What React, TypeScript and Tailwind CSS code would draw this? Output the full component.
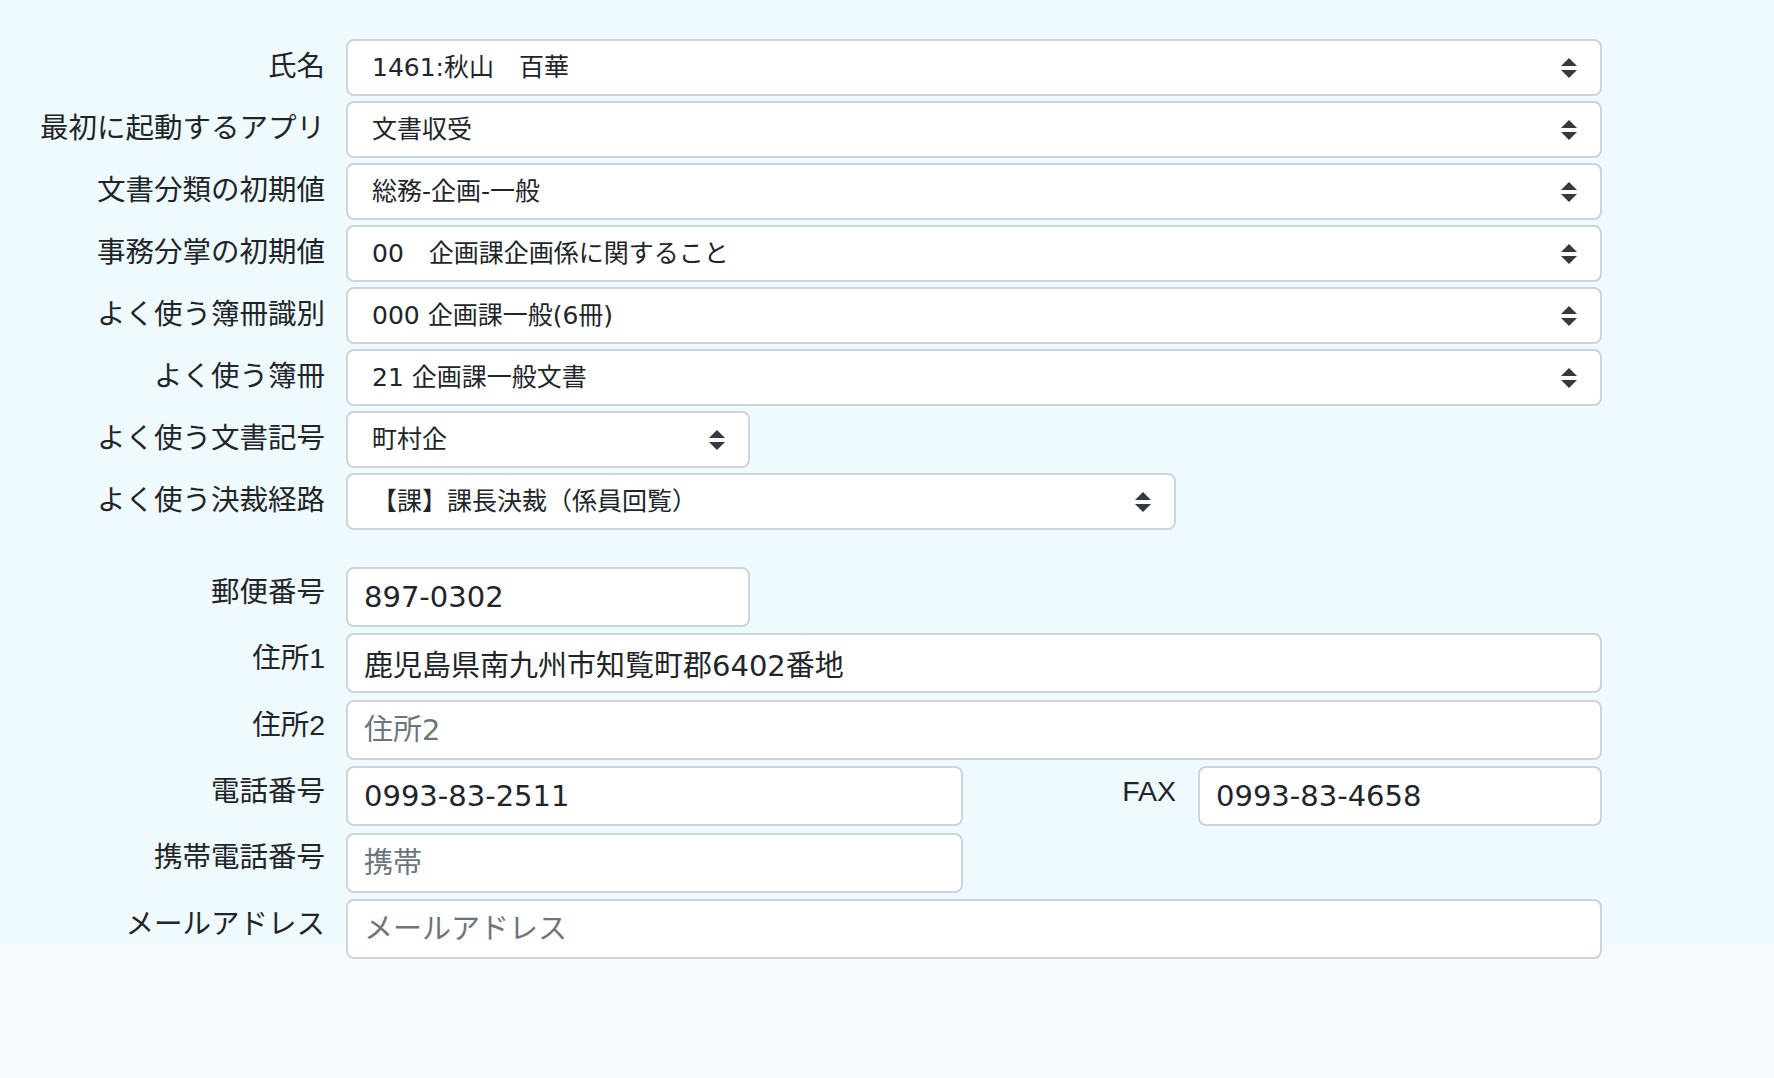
import React from 'react';

const FONT = '[font-family:"Liberation_Sans","Noto_Sans_CJK_JP",sans-serif]';
// 入力欄・セレクトは数字が幅広に見えるのでDejaVuを優先
const FIELD_FONT = '[font-family:"DejaVu_Sans","Noto_Sans_CJK_JP",sans-serif]';

interface SelectRow {
  label: string;
  value: string;
  width: string;
}

const selectRows: SelectRow[] = [
  { label: '氏名', value: '1461:秋山　百華', width: 'w-[1256px]' },
  { label: '最初に起動するアプリ', value: '文書収受', width: 'w-[1256px]' },
  { label: '文書分類の初期値', value: '総務-企画-一般', width: 'w-[1256px]' },
  { label: '事務分掌の初期値', value: '00　企画課企画係に関すること', width: 'w-[1256px]' },
  { label: 'よく使う簿冊識別', value: '000 企画課一般(6冊)', width: 'w-[1256px]' },
  { label: 'よく使う簿冊', value: '21 企画課一般文書', width: 'w-[1256px]' },
  { label: 'よく使う文書記号', value: '町村企', width: 'w-[404px]' },
  { label: 'よく使う決裁経路', value: '【課】課長決裁（係員回覧）', width: 'w-[830px]' },
];

// bootstrap風の上下矢印
const SortArrows = () => (
  <svg width="16" height="20" viewBox="0 0 4 5" className="shrink-0">
    <path d="M2 0L0 2h4zm0 5L0 3h4z" fill="#343a40" />
  </svg>
);

const FakeSelect = ({ value, width }: { value: string; width: string }) => (
  <div
    className={`${width} h-[57px] shrink-0 flex items-center justify-between pl-[24px] pr-[23px] bg-white border-2 border-[#ced4da] rounded-lg text-[25px] text-[#212529] whitespace-pre ${FIELD_FONT}`}
  >
    <span>{value}</span>
    <SortArrows />
  </div>
);

const Label = ({ children, input }: { children: React.ReactNode; input?: boolean }) => (
  <div
    className={`w-[346px] shrink-0 pr-[21px] text-right text-[28.5px] leading-none text-[#212529] ${input ? 'pb-[10px]' : 'pb-[3px]'}`}
  >
    {children}
  </div>
);

const TextInput = ({ value, placeholder, width }: { value?: string; placeholder?: string; width: string }) => (
  <input
    type="text"
    defaultValue={value}
    placeholder={placeholder}
    className={`${width} h-[60px] shrink-0 pl-[16px] pr-3 bg-white border-2 border-[#ced4da] rounded-lg text-[29px] text-[#212529] placeholder:text-[#6c757d] outline-none ${FIELD_FONT}`}
  />
);

export default function App() {
  return (
    <div className={`min-h-screen bg-[#f6f9fe] ${FONT}`}>
      <div className="h-[945px] bg-[#effafe] pt-[39px]">
        <div className="w-[1602px] flex flex-col">
          {/* 初期値設定 */}
          <div className="flex flex-col gap-[5px]">
            {selectRows.map((row) => (
              <div key={row.label} className="flex items-center">
                <Label>{row.label}</Label>
                <FakeSelect value={row.value} width={row.width} />
              </div>
            ))}
          </div>

          {/* 連絡先 */}
          <div className="flex flex-col gap-[6.4px] mt-[37px]">
            <div className="flex items-center">
              <Label input>郵便番号</Label>
              <TextInput value="897-0302" width="w-[404px]" />
            </div>
            <div className="flex items-center">
              <Label input>住所1</Label>
              <TextInput value="鹿児島県南九州市知覧町郡6402番地" width="w-[1256px]" />
            </div>
            <div className="flex items-center">
              <Label input>住所2</Label>
              <TextInput placeholder="住所2" width="w-[1256px]" />
            </div>
            <div className="flex items-center">
              <Label input>電話番号</Label>
              <TextInput value="0993-83-2511" width="w-[617px]" />
              <div className="flex-1 pr-[22px] pb-[10px] text-right text-[28.5px] leading-none text-[#212529]">FAX</div>
              <TextInput value="0993-83-4658" width="w-[404px]" />
            </div>
            <div className="flex items-center">
              <Label input>携帯電話番号</Label>
              <TextInput placeholder="携帯" width="w-[617px]" />
            </div>
            <div className="flex items-center">
              <Label input>メールアドレス</Label>
              <TextInput placeholder="メールアドレス" width="w-[1256px]" />
            </div>
          </div>
        </div>
      </div>
    </div>
  );
}
